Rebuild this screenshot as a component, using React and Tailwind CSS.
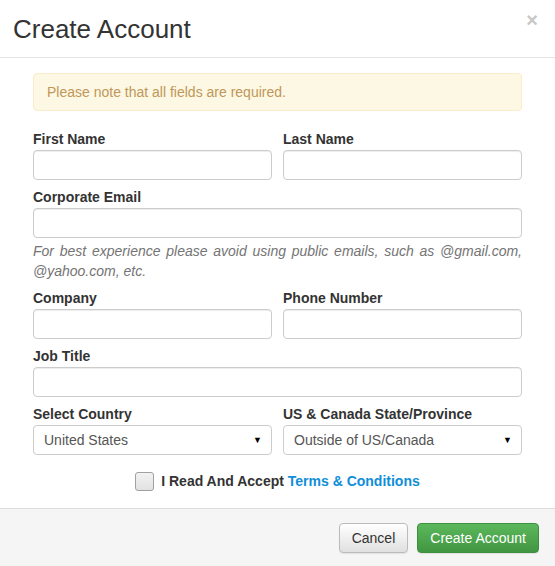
const Field = ({ label, className = '' }) => (
  <div className={className}>
    <label className="block text-[14px] font-bold leading-[20px] text-[#333] mb-px">{label}</label>
    <input
      type="text"
      className="block w-full h-[30px] px-[10px] border border-[#ccc] rounded-[4px] bg-white text-[14px] text-[#555] outline-none shadow-[inset_0_1px_1px_rgba(0,0,0,0.075)]"
    />
  </div>
);

const SelectField = ({ label, value }) => (
  <div>
    <label className="block text-[14px] font-bold leading-[20px] text-[#333] mb-px">{label}</label>
    <div className="flex items-center justify-between h-[30px] pl-[10px] pr-[9px] border border-[#ccc] rounded-[4px] bg-white">
      <span className="text-[14px] text-[#555]">{value}</span>
      <span className="text-[9px] text-black leading-none">▼</span>
    </div>
  </div>
);

export default function App() {
  return (
    <div
      className="w-[555px] h-[566px] bg-white flex flex-col overflow-hidden"
      style={{ fontFamily: '"Liberation Sans", Arial, sans-serif' }}
    >
      <div className="relative h-[58px] border-b border-[#e5e5e5] flex items-center pl-[13px]">
        <h1 className="text-[26px] leading-none text-[#333] font-normal">Create Account</h1>
        <span className="absolute right-[17px] top-[10px] text-[20px] font-bold leading-[20px] text-[#c8c8c8]">×</span>
      </div>

      <div className="flex-1 px-[33px] pt-[15px]">
        <div className="h-[38px] flex items-center px-[13px] bg-[#fcf8e3] border border-[#faebcc] rounded-[4px] text-[14px] text-[#c0975a]">
          Please note that all fields are required.
        </div>

        <div className="mt-[18px] flex flex-col gap-[7px]">
          <div className="grid grid-cols-2 gap-x-[11px]">
            <Field label="First Name" />
            <Field label="Last Name" />
          </div>
          <div>
            <Field label="Corporate Email" />
            <p className="mt-[3px] text-[14px] leading-[20px] italic text-[#747474] text-justify">
              For best experience please avoid using public emails, such as @gmail.com, @yahoo.com, etc.
            </p>
          </div>
          <div className="grid grid-cols-2 gap-x-[11px]">
            <Field label="Company" />
            <Field label="Phone Number" />
          </div>
          <Field label="Job Title" />
          <div className="grid grid-cols-2 gap-x-[11px]">
            <SelectField label="Select Country" value="United States" />
            <SelectField label="US & Canada State/Province" value="Outside of US/Canada" />
          </div>
        </div>

        <div className="mt-[16px] flex items-center justify-center gap-[7px]">
          <span className="block w-[19px] h-[19px] rounded-[3px] border border-[#a0a0a0] bg-gradient-to-b from-[#f2f2f2] to-[#e2e2e2]" />
          <span className="text-[14px] font-bold text-[#333]">
            I Read And Accept <span className="text-[#108ed8]">Terms &amp; Conditions</span>
          </span>
        </div>
      </div>

      <div className="h-[58px] border-t border-[#ddd] bg-[#f5f5f5] flex justify-end items-start pt-[14px] pr-[16px] gap-[9px]">
        <button className="h-[30px] px-[12px] rounded-[4px] border border-[#bbb] bg-gradient-to-b from-white to-[#e0e0e0] text-[14px] text-[#333] shadow-[0_1px_1px_rgba(0,0,0,0.08)]">
          Cancel
        </button>
        <button className="h-[30px] px-[12px] rounded-[4px] border border-[#3e8f3e] bg-gradient-to-b from-[#5cb85c] to-[#419641] text-[14px] text-white shadow-[0_1px_1px_rgba(0,0,0,0.08)]">
          Create Account
        </button>
      </div>
    </div>
  );
}
